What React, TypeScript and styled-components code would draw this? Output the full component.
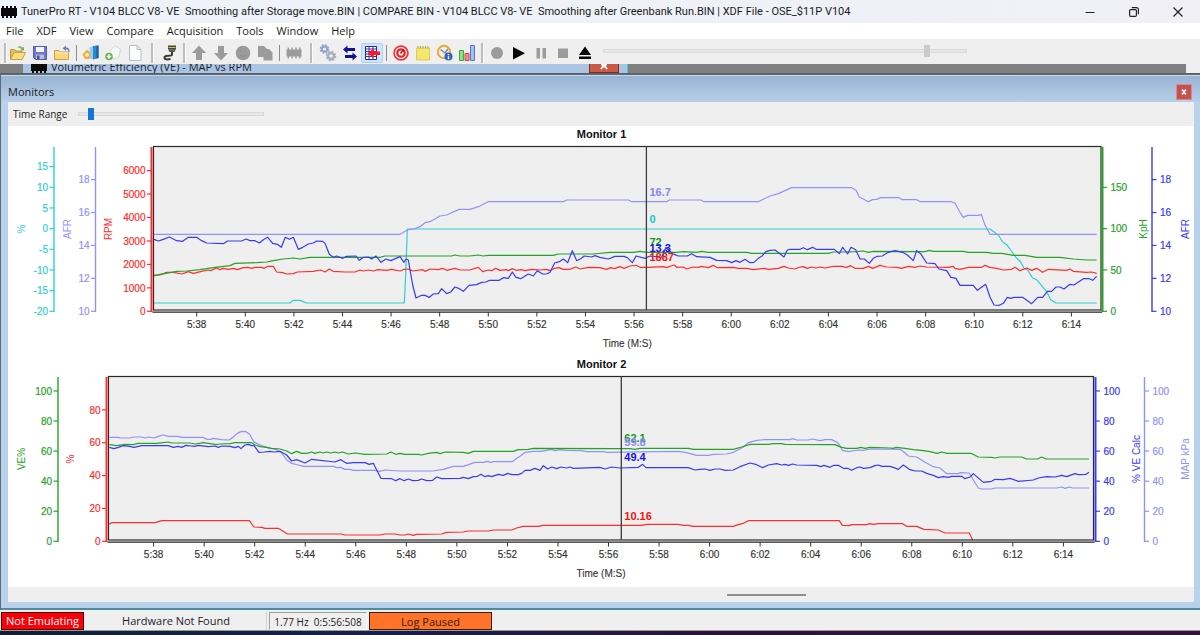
import React from 'react';
import styled, { createGlobalStyle, css } from 'styled-components';

const Global = createGlobalStyle`
  * { box-sizing: border-box; }
  html, body { margin: 0; padding: 0; }
  body {
    background: #efefef;
    color: #1c1c1c;
    font-family: "Open Sans", "Noto Sans", sans-serif;
    font-size: 11px;
    line-height: 16px;
  }
  button, input { font: inherit; color: inherit; margin: 0; padding: 0; }
`;

/* ---------- Frame ---------- */

const Frame = styled.div`
  display: flex;
  flex-direction: column;
  min-height: 100vh;
`;

const TitleBar = styled.header`
  display: flex;
  align-items: center;
  height: 23px;
  padding-left: 1px;
  gap: 4px;
  background: linear-gradient(90deg, #edf3fa, #f1f0f7);
`;

const TitleText = styled.h1`
  flex: 1;
  min-width: 0;
  margin: 0;
  overflow: hidden;
  white-space: pre;
  font-family: Roboto, "Open Sans", sans-serif;
  font-size: 11px;
  font-weight: 400;
`;

const Controls = styled.div`
  display: flex;
`;

const CaptionButton = styled.button`
  display: flex;
  align-items: center;
  justify-content: center;
  width: 44px;
  height: 22px;
  border: 0;
  background: none;
`;

const MenuBar = styled.nav`
  display: flex;
  gap: 13px;
  height: 16px;
  padding-left: 6px;
  background: #fff;
`;

const MenuItem = styled.button`
  border: 0;
  background: none;
  line-height: 16px;
`;

const ToolBar = styled.div`
  display: flex;
  align-items: center;
  height: 25px;
  padding: 2px 0 0 3px;
  background: #efefef;
`;

const Grip = styled.span<{ $width: number }>`
  width: ${p => p.$width}px;
  display: flex;
  justify-content: center;
  &::before {
    content: "";
    width: 2px;
    height: 20px;
    background: #bdbdbd;
    border-right: 1px solid #fafafa;
  }
`;

const Separator = styled.span`
  width: 7px;
  height: 16px;
  background: linear-gradient(#8c8c8c, #8c8c8c) center / 1px 16px no-repeat;
`;

const ToolButton = styled.button<{ $on?: boolean }>`
  display: flex;
  align-items: center;
  justify-content: center;
  width: 22px;
  height: 20px;
  border: 1px solid transparent;
  border-radius: 2px;
  background: none;
  ${p => p.$on && css`
    border-color: #a5d3f7;
    background: #cce6fb;
  `}
`;

const Range = styled.input<{ $thumb: string; $width: number }>`
  appearance: none;
  width: ${p => p.$width}px;
  height: 14px;
  background: none;
  &::-webkit-slider-runnable-track {
    height: 4px;
    border: 1px solid #d6dad9;
    background: #e5e8e7;
  }
  &::-webkit-slider-thumb {
    appearance: none;
    width: 6px;
    height: 12px;
    margin-top: -5px;
    background: ${p => p.$thumb};
  }
`;

const VolumeSlot = styled.div`
  display: flex;
  margin-left: 7px;
  padding-bottom: 4px;
`;

/* ---------- Document area ---------- */

const Strip = styled.div`
  display: flex;
  height: 10px;
  padding-right: 14px;
  overflow: hidden;
  border-bottom: 1px solid #5e5e5e;
`;

const Desk = styled.div<{ $width?: number }>`
  flex: ${p => (p.$width ? `0 0 ${p.$width}px` : '1')};
  background: #808080;
`;

const BackWindow = styled.div`
  display: flex;
  align-items: flex-end;
  flex: 0 1 605px;
  min-width: 0;
  padding: 0 8px;
  gap: 4px;
  background: #aac4e3;
  border-right: 1px solid #4fc3e0;
`;

const BackTitle = styled.span`
  flex: 1;
  white-space: nowrap;
`;

const BackClose = styled.button`
  display: flex;
  justify-content: center;
  width: 30px;
  height: 9px;
  border: 1px solid #7c2f2b;
  border-top: 0;
  background: linear-gradient(#c75945, #cf5a48);
`;

const Clip = styled.span`
  display: flex;
  align-items: center;
  height: 12px;
  flex: 1;
  min-width: 0;
  gap: 4px;
`;

const ToolWindow = styled.section`
  flex: 1;
  display: flex;
  flex-direction: column;
  padding: 0 6px 6px 7px;
  border: 1px solid #5c6c7c;
  border-width: 1px 0 2px 1px;
  border-bottom-color: #4e8c98;
  background: #b9d1ea;
`;

const WindowHeader = styled.div`
  display: flex;
  align-items: center;
  justify-content: space-between;
  height: 27px;
  margin: 0 -6px 0 -7px;
  padding: 5px 8px 0 7px;
  border-top: 1px solid #c4d8ec;
  background: linear-gradient(#98b4d2, #b7cfe8);
`;

const WindowTitle = styled.h2`
  margin: 0;
  font-size: 11px;
  font-weight: 400;
`;

const CloseButton = styled.button`
  display: flex;
  align-items: center;
  justify-content: center;
  width: 16px;
  height: 16px;
  border: 1px solid #d98a8a;
  background: #c75050;
`;

const RangeBar = styled.div`
  display: flex;
  align-items: center;
  height: 24px;
  padding: 0 5px;
  gap: 11px;
  background: #efefef;
`;

const RangeLabel = styled.label`
  width: 54px;
  font-size: 10px;
  white-space: nowrap;
`;

const Monitors = styled.div`
  flex: 1;
  background: #fff;
`;

const ScrollStrip = styled.div`
  display: grid;
  grid-template-columns: 719fr 79fr 388fr;
  align-items: center;
  height: 15px;
  background: #efefef;
`;

const ScrollThumb = styled.span`
  grid-column: 2;
  height: 2px;
  background: #8e8e8e;
`;

const StatusBar = styled.footer`
  display: flex;
  align-items: center;
  gap: 2px;
  height: 21px;
  padding: 1px 1px 0;
  border-bottom: 1px solid #9a9a9a;
  background: #efefef;
`;

type Tone = 'alert' | 'plain' | 'sunken' | 'paused';
const tones = {
  alert: css`border: 1px solid #4a0000; background: #fb0007; color: #fff; line-height: 15px;`,
  plain: css`border-right: 1px solid #d2d2d2;`,
  sunken: css`border: 1px solid #fafafa; border-top-color: #a0a0a0; border-left-color: #a0a0a0; font-size: 10px;`,
  paused: css`border: 1px solid #3d1c08; background: #ff7428; color: #3a1a08;`,
};

const StatusCell = styled.div<{ $tone: Tone; $width: number }>`
  width: ${p => p.$width}px;
  height: 18px;
  line-height: 18px;
  text-align: center;
  white-space: pre;
  ${p => tones[p.$tone]}
`;

const TaskEdge = styled.div`
  height: 4px;
  background: linear-gradient(90deg, #10202e, #16204a 30%, #2a1238 60%, #35123a);
`;

/* ---------- Chart ---------- */

const ChartSvg = styled.svg`
  display: block;
  width: 100%;
  height: auto;
  font-family: "Liberation Sans", Arial, sans-serif;
`;
const Tick = styled.text`font-size: 10px;`;
const Strong = styled.text`font-size: 11px; font-weight: 700;`;

const CYAN = '#2fcfcf';
const LILAC = '#9292fb';
const RED = '#ff2d2d';
const GREEN = '#24a324';
const BLUE = '#3a3af5';

type Axis = {
  x: number; side: 'left' | 'right'; color: string; name: string; nameX: number;
  labels: number[]; step: number; wide?: boolean;
};
type Trace = { color: string; points: string };
type Mark = { text: string; y: number; color: string };
type Monitor = {
  title: string; left: number; right: number; cursor: number;
  firstTick: number; lastTick: number; axes: Axis[]; traces: Trace[]; marks: Mark[];
};

const times = Array.from({ length: 19 }, (_, i) => {
  const s = 38 + i * 2;
  return `${s < 60 ? 5 : 6}:${String(s % 60).padStart(2, '0')}`;
});

const TOP = 22;
const BASE = 186;

function AxisView({ axis }: { axis: Axis }) {
  const dir = axis.side === 'left' ? -1 : 1;
  return (
    <g fill={axis.color} stroke="none">
      <path d={`M${axis.x} ${TOP}V${BASE + 1}`} stroke={axis.color} strokeWidth={axis.wide ? 2 : 1.4} />
      {axis.labels.map((v, i) => {
        const y = BASE + 0.3 - axis.step * i;
        return (
          <g key={v}>
            <path d={`M${axis.x} ${y}h${dir * 4.5}`} stroke={axis.color} strokeWidth="1.2" />
            <Tick x={axis.x + dir * (dir < 0 ? 6 : 8)} y={y + 3.7} textAnchor={dir < 0 ? 'end' : 'start'} stroke={axis.color} strokeWidth="0.2">{v}</Tick>
          </g>
        );
      })}
      <Tick transform={`translate(${axis.nameX} 104) rotate(-90)`} textAnchor="middle">{axis.name}</Tick>
    </g>
  );
}

function Chart({ m }: { m: Monitor }) {
  const mid = (m.left + m.right) / 2;
  return (
    <ChartSvg viewBox="8 1 1186 230" role="img" aria-label={m.title}>
      <Strong x="601.5" y="13" textAnchor="middle" fill="#111">{m.title}</Strong>
      <rect x={m.left} y="21.5" width={m.right - m.left} height="163.5" fill="#efefef" />
      {/* traces are sampled on a grid three times finer than the plot */}
      <g transform="scale(0.33333)" fill="none" strokeWidth="3.6" strokeLinejoin="round">
        {m.traces.map(t => <polyline key={t.color} points={t.points} stroke={t.color} />)}
      </g>
      <rect x={m.left} y="21.5" width={m.right - m.left} height="163.5" fill="none" stroke="#2a2a2a" strokeWidth="1.2" />
      <path d={`M${m.left - 1} 187.2H${m.right + 1}`} stroke="#222" strokeWidth="1.2" />
      <path d={`M${m.cursor} 21V185`} stroke="#3c3c3c" strokeWidth="1.3" />
      {m.marks.map(k => <Strong key={k.text} x={m.cursor + 3} y={k.y} fill={k.color}>{k.text}</Strong>)}
      {times.map((t, i) => {
        const x = m.firstTick + ((m.lastTick - m.firstTick) * i) / 18;
        return (
          <g key={t} fill="#333">
            <path d={`M${x} 187v4.5`} stroke="#333" />
            <Tick x={x} y="203" textAnchor="middle" stroke="#333" strokeWidth="0.15">{t}</Tick>
          </g>
        );
      })}
      <Tick x={mid} y="221.5" textAnchor="middle" fill="#333" stroke="#333" strokeWidth="0.1">Time (M:S)</Tick>
      {m.axes.map(a => <AxisView key={a.x} axis={a} />)}
    </ChartSvg>
  );
}

const steps = (from: number, by: number, n: number) => Array.from({ length: n }, (_, i) => from + by * i);

const monitor1: Monitor = {
  title: 'Monitor 1', left: 153.5, right: 1101, cursor: 646.4, firstTick: 196.7, lastTick: 1071.4,
  axes: [
    { x: 54, side: 'left', color: CYAN, name: '%', nameX: 25, labels: steps(-20, 5, 8), step: 20.67 },
    { x: 95.5, side: 'left', color: LILAC, name: 'AFR', nameX: 71, labels: steps(10, 2, 5), step: 32.92 },
    { x: 151.5, side: 'left', color: RED, name: 'RPM', nameX: 112, labels: steps(0, 1000, 7), step: 23.45, wide: true },
    { x: 1102.5, side: 'right', color: GREEN, name: 'KpH', nameX: 1147, labels: steps(0, 50, 4), step: 41.33, wide: true },
    { x: 1152, side: 'right', color: BLUE, name: 'AFR', nameX: 1189, labels: steps(10, 2, 5), step: 32.92 },
  ],
  traces: [
    { color: CYAN, points: '462,534 870,534 880,526 900,526 920,534 1213,534 1217,450 1222,312 2970,312 2995,330 3008,351 3020,359 3032,375 3048,397 3062,411 3072,430 3083,435 3097,458 3112,466 3125,482 3140,500 3152,524 3168,534 3290,534' },
    { color: RED, points: '462,450 480,450 500,442 520,442 545,447 565,440 580,445 605,439 625,435 632,437 650,429 660,434 670,430 685,433 700,430 712,434 730,428 745,427 755,430 765,427 785,427 793,430 803,424 820,424 830,441 848,443 860,447 880,446 892,441 940,439 962,435 975,441 988,432 1000,439 1035,441 1065,441 1080,435 1090,438 1105,435 1120,438 1133,434 1160,436 1175,433 1200,438 1215,432 1228,433 1238,438 1268,434 1275,439 1290,432 1315,434 1328,430 1340,436 1365,430 1380,435 1410,435 1435,427 1448,440 1465,435 1475,437 1487,430 1500,436 1520,434 1525,437 1538,431 1548,436 1565,434 1575,437 1595,433 1620,435 1640,433 1650,437 1663,430 1677,428 1690,433 1708,433 1728,426 1740,432 1765,427 1800,428 1820,433 1832,428 1843,431 1860,425 1872,430 1890,423 1908,421 1920,427 1945,427 1990,425 2000,428 2012,423 2023,420 2030,427 2050,426 2060,432 2080,426 2095,427 2105,424 2125,428 2140,421 2152,428 2200,427 2215,430 2240,430 2260,434 2295,430 2305,433 2335,430 2352,424 2365,429 2385,432 2400,426 2410,425 2422,430 2435,426 2448,429 2460,426 2475,429 2500,424 2525,424 2540,427 2552,422 2565,430 2590,430 2605,424 2618,430 2640,421 2660,426 2690,427 2705,430 2725,424 2745,427 2760,423 2780,426 2845,427 2860,424 2865,430 2880,433 2905,427 2945,427 2955,421 2970,427 2990,430 3010,435 3035,433 3045,427 3060,437 3080,429 3095,436 3110,430 3128,442 3145,433 3200,436 3210,432 3220,439 3260,442 3275,441 3290,445' },
    { color: GREEN, points: '462,453 480,448 510,443 530,439 560,438 600,434 640,428 690,422 705,415 770,413 800,411 820,407 850,402 880,399 900,402 930,397 1140,397 1155,393 1355,393 1365,390 1380,393 1410,393 1435,390 1450,393 1465,391 1660,391 1675,387 1780,387 1830,382 1900,382 1920,379 1940,382 2030,382 2050,380 2090,382 2105,379 2125,382 2240,382 2255,385 2485,385 2500,381 2530,381 2565,380 2590,378 2605,382 2620,379 2775,380 2788,376 2800,379 2890,379 2905,382 2960,382 2980,385 3005,385 3040,391 3075,391 3110,397 3180,397 3220,402 3260,405 3290,405' },
    { color: LILAC, points: '462,328 1200,328 1222,315 1245,311 1260,305 1275,293 1290,290 1320,273 1340,270 1377,253 1410,253 1435,245 1465,230 1690,230 1700,225 1885,225 1895,230 2000,230 2008,225 2103,225 2112,230 2275,230 2310,213 2335,206 2375,188 2555,188 2568,196 2578,216 2590,222 2605,230 2618,224 2630,223 2642,218 2698,218 2705,224 2750,224 2762,230 2855,230 2865,235 2880,262 2890,277 2903,271 2937,271 2944,268 2955,300 2970,328 3290,328' },
    { color: BLUE, points: '462,343 475,348 490,343 508,336 530,347 548,349 565,337 590,337 605,347 620,354 670,356 683,348 725,348 738,342 750,347 765,347 778,354 790,344 803,337 818,355 832,358 844,367 856,337 868,343 880,337 895,373 908,367 925,357 940,354 950,348 968,349 975,355 988,388 1000,397 1010,393 1028,400 1040,394 1068,393 1078,406 1090,397 1105,396 1115,402 1128,393 1143,412 1158,402 1172,407 1200,395 1212,412 1218,402 1225,405 1238,480 1248,519 1265,511 1275,511 1288,517 1300,507 1315,506 1325,491 1340,506 1352,501 1365,486 1378,491 1390,499 1407,481 1430,479 1445,472 1458,471 1468,466 1498,466 1510,458 1525,460 1537,441 1548,457 1562,461 1585,447 1600,453 1612,437 1628,447 1640,447 1650,442 1664,414 1678,410 1690,402 1703,413 1717,377 1730,407 1742,401 1753,393 1775,396 1785,392 1800,397 1825,402 1845,394 1872,394 1882,398 1897,413 1908,393 1935,400 1950,393 1985,397 1998,367 2012,381 2025,389 2035,393 2062,393 2075,386 2090,395 2130,397 2150,406 2180,407 2195,413 2208,407 2220,412 2235,403 2250,413 2262,412 2275,400 2285,394 2298,380 2310,376 2325,375 2338,385 2352,396 2362,375 2370,373 2400,373 2410,368 2422,374 2438,367 2448,373 2503,373 2518,386 2528,367 2543,387 2553,367 2567,374 2580,402 2593,402 2608,415 2620,400 2632,394 2647,393 2662,383 2685,377 2708,382 2722,390 2740,407 2750,377 2762,386 2780,414 2805,416 2817,432 2840,437 2853,457 2868,460 2880,481 2920,481 2932,496 2957,478 2970,516 2982,540 2998,541 3010,535 3022,517 3032,520 3042,517 3068,517 3095,536 3113,517 3128,517 3142,499 3155,499 3168,486 3180,486 3192,492 3210,478 3222,480 3250,461 3268,461 3278,466 3290,454' },
  ],
  marks: [
    { text: '16.7', y: 70.5, color: '#8484f8' },
    { text: '0', y: 97.8, color: '#12c6cc' },
    { text: '72', y: 120.7, color: '#139a13' },
    { text: '1887', y: 136.3, color: '#f51414' },
    { text: '13.3', y: 127, color: '#1414ee' },
  ],
};

const monitor2: Monitor = {
  title: 'Monitor 2', left: 108.5, right: 1093.5, cursor: 621.3, firstTick: 153.6, lastTick: 1063.4,
  axes: [
    { x: 58, side: 'left', color: GREEN, name: 'VE%', nameX: 25, labels: steps(0, 20, 6), step: 30.07 },
    { x: 106.5, side: 'left', color: RED, name: '%', nameX: 74, labels: steps(0, 20, 5), step: 32.85, wide: true },
    { x: 1095.5, side: 'right', color: BLUE, name: '% VE Calc', nameX: 1140, labels: steps(0, 20, 6), step: 30.07, wide: true },
    { x: 1144.5, side: 'right', color: LILAC, name: 'MAP kPa', nameX: 1189, labels: steps(0, 20, 6), step: 30.07 },
  ],
  traces: [
    { color: RED, points: '328,508 335,503 465,503 485,497 748,497 762,516 785,517 795,520 835,520 848,528 862,537 1025,537 1035,540 1140,540 1155,537 1185,537 1200,540 1215,540 1225,537 1240,541 1250,538 1325,537 1340,532 1390,531 1405,528 1465,528 1480,525 1535,525 1550,519 1570,514 1615,514 1628,511 1925,511 1940,508 2035,508 2050,511 2065,511 2080,514 2200,514 2215,509 2230,505 2245,497 2518,497 2527,511 2548,512 2555,509 2600,509 2610,506 2620,508 2635,506 2708,506 2720,514 2750,514 2772,523 2815,525 2835,534 2908,534 2918,555' },
    { color: LILAC, points: '328,247 355,247 363,249 390,249 400,246 425,246 437,249 445,246 462,249 475,244 490,240 505,244 535,244 545,247 608,247 622,253 632,253 640,250 665,254 688,255 700,246 712,235 725,229 738,230 748,237 763,262 785,272 810,280 828,283 845,294 860,315 875,325 895,330 910,334 1000,334 1010,338 1022,337 1035,343 1050,343 1060,346 1125,346 1140,349 1155,345 1200,348 1298,348 1330,343 1360,334 1390,334 1425,322 1450,322 1460,319 1472,322 1480,320 1537,320 1550,310 1562,302 1575,292 1600,289 1625,289 1640,286 1655,283 1665,287 1680,284 1695,286 1745,287 1760,290 1810,290 1820,292 2035,289 2060,293 2090,301 2125,301 2140,298 2180,297 2200,292 2215,284 2230,276 2245,263 2270,256 2295,254 2370,254 2380,251 2390,255 2425,255 2437,252 2460,257 2475,254 2495,254 2512,262 2520,272 2527,286 2545,290 2575,285 2590,286 2610,282 2700,283 2712,291 2725,303 2750,306 2775,322 2800,335 2820,339 2840,356 2875,356 2880,353 2908,354 2920,375 2935,399 2945,402 2975,402 2985,399 3170,399 3185,396 3195,400 3208,396 3218,399 3267,399' },
    { color: GREEN, points: '328,269 350,272 375,268 400,269 415,265 470,265 490,263 505,261 515,264 570,264 585,267 610,263 650,269 660,267 690,266 705,263 755,263 765,270 780,275 800,277 815,280 840,282 860,288 875,296 890,289 905,295 920,295 935,291 945,295 960,291 970,294 980,291 992,294 1005,291 1015,294 1027,291 1045,297 1065,294 1095,298 1160,297 1173,291 1187,298 1200,295 1215,298 1255,298 1265,300 1285,295 1310,292 1320,296 1335,291 1390,292 1405,295 1420,289 1540,289 1555,284 1585,283 1600,280 1845,281 1890,281 1905,283 1920,280 2065,280 2080,283 2200,283 2225,276 2250,268 2305,268 2320,266 2345,266 2355,268 2505,269 2525,277 2540,280 2570,280 2582,277 2595,280 2610,277 2670,279 2680,280 2688,277 2715,280 2740,284 2770,287 2790,290 2812,295 2825,291 2840,295 2913,295 2935,306 2975,307 2985,309 3000,306 3065,306 3080,312 3112,312 3125,306 3138,312 3267,312' },
    { color: BLUE, points: '328,277 342,281 355,277 370,272 388,274 402,277 425,272 505,272 520,277 535,274 545,277 558,271 575,273 583,274 595,271 625,275 645,273 655,277 665,273 690,274 705,278 715,274 723,281 735,270 745,268 755,272 762,272 777,292 793,291 810,289 820,291 840,289 860,300 875,318 890,314 915,324 935,313 1005,321 1022,314 1040,325 1060,323 1095,323 1107,328 1120,325 1130,345 1143,370 1175,371 1187,377 1200,371 1212,377 1225,372 1238,377 1255,376 1265,372 1280,377 1298,376 1310,366 1325,371 1380,370 1390,367 1405,371 1420,365 1432,364 1443,358 1455,365 1465,362 1475,365 1495,358 1510,361 1523,355 1535,359 1555,359 1565,355 1575,346 1590,346 1605,340 1620,346 1630,332 1643,342 1655,336 1670,341 1683,336 1700,339 1710,336 1720,340 1800,337 1815,342 1835,336 1860,339 1915,337 1928,328 1938,338 2065,338 2085,345 2100,343 2115,342 2130,346 2145,342 2160,342 2175,346 2200,345 2220,335 2250,324 2270,329 2288,338 2305,330 2330,326 2345,330 2355,328 2365,331 2378,327 2390,330 2450,331 2462,335 2472,331 2490,337 2502,331 2515,331 2530,340 2543,340 2555,346 2570,338 2580,336 2590,340 2610,338 2625,332 2635,330 2645,334 2670,334 2682,338 2695,343 2710,330 2730,344 2745,348 2765,348 2780,355 2800,361 2815,368 2830,365 2845,367 2855,364 2885,364 2895,371 2910,366 2920,356 2950,382 2975,379 2985,373 3010,374 3030,370 3055,379 3100,375 3115,369 3140,365 3165,366 3185,361 3200,365 3225,356 3235,359 3258,358 3267,352' },
  ],
  marks: [
    { text: '62.1', y: 87, color: '#139a13' },
    { text: '59.8', y: 91.3, color: '#8c8cfa' },
    { text: '49.4', y: 106.3, color: '#1414ee' },
    { text: '10.16', y: 164.7, color: '#f51414' },
  ],
};

/* ---------- Icons ---------- */

const Chip = () => (
  <svg width="16" height="14" viewBox="0 0 16 14" fill="#0a0a0a" aria-hidden="true">
    <path d="M0 3h16v8H0zM1 1h2v2H1zM5 1h2v2H5zM9 1h2v2H9zM13 1h2v2h-2zM1 11h2v2H1zM5 11h2v2H5zM9 11h2v2H9zM13 11h2v2h-2z" />
  </svg>
);

const GREY = '#9b9b9b';
const icons: Record<string, React.ReactNode> = {
  open: <>
    <path d="M1.5 15V5.5h4l1.500 1.500h6v8z" fill="#e9bd55" stroke="#c4963c" />
    <path d="M1.500 15.500l3.500-7h11.500l-3.500 7z" fill="#fbdc80" stroke="#cc9f43" />
    <path d="M8 3.500c2-2 4.500-1.500 5.500.2l1.300-1 .4 4-3.900-.7 1.300-.9c-.8-1.200-2.600-1.800-4.600-1.600z" fill="#6fb653" />
  </>,
  save: <>
    <path d="M2.500 2.500h13v13h-11l-2-2z" fill="#7177c9" stroke="#555bae" />
    <path d="M5 3h8v5H5z" fill="#f3f5fb" /><path d="M5 10.500h8V15H5z" fill="#b9bfd3" /><path d="M6 11.500h2.500V15H6z" fill="#4b5196" />
  </>,
  reopen: <>
    <path d="M1.500 15.500v-9h4.500l1.500 1.500h8v7.500z" fill="#f8d77c" stroke="#cba148" />
    <path d="M2 9h13.500" stroke="#fff0ba" />
    <path d="M16.500 8c.5-3-1-4.800-3.500-4.600V1.500L9.500 4.300 13 7V5.200c1.400-.1 2.300.8 2.300 2.800z" fill="#6e7fca" />
  </>,
  db: <>
    <path d="M7.500 3.500l3.500-1.500v13.500l-3.500-1.500z" fill="#8dcdf2" />
    <path d="M11 2l5.500-.5v12.500L11 15.500z" fill="#2f86c8" /><path d="M14.500 1.700l2-.2v12.500l-2 .5z" fill="#1c5f9e" />
    <path d="M5 5.500L8.500 9l-1 6H3l-2.500-4.500z" fill="#f2ab38" /><circle cx="5" cy="10.800" r="1.900" fill="#fff4d0" />
  </>,
  addtag: <>
    <path d="M6 6.500l5-4.500 5.500 3-1.500 8-5 2-4-3z" fill="#f7f7f7" stroke="#d6d6d6" />
    <circle cx="5" cy="12.500" r="3.800" fill="#69b255" /><path d="M5 10.300v4.400M2.800 12.500h4.400" stroke="#fff" strokeWidth="1.400" />
  </>,
  page: <path d="M3.500 1.500h7.500l4 4v11H3.500zM11 1.500v4h4" fill="#fcfcfc" stroke="#b9bcc6" />,
  plug: <>
    <path d="M8 1.500h8v3l-1.500 3.500h-5L8 4.500z" fill="#4a4a3e" /><path d="M8.500 3.500h7" stroke="#c9c25a" />
    <path d="M12 8v2.500c0 2.500-7.500 0-7.500 3 0 2.500 3 2 6 1.500" fill="none" stroke="#3a3a34" strokeWidth="2" />
    <path d="M9.500 6h5" stroke="#8a8a70" />
  </>,
  up: <path d="M9 1.500l7 7.500h-4v7H6V9H2z" fill={GREY} />,
  down: <path d="M9 16.500L2 9h4V2h6v7h4z" fill={GREY} />,
  ball: <><circle cx="9" cy="9" r="7.300" fill={GREY} /><path d="M6 7.500h1M11 7.500h1M6 11.500q3 1.800 6 0" stroke="#8c8c8c" fill="none" /></>,
  copy: <path d="M2 2h6l3 3h2l3.500 3.500V16.500H7.500V13H2z" fill={GREY} />,
  chip: <path d="M1.500 5.500h15v7h-15zM2.500 3.500H4v2H2.500zM6.300 3.500h1.500v2H6.300zM10.200 3.500h1.500v2h-1.500zM14 3.500h1.500v2H14zM2.500 12.500H4v2H2.500zM6.300 12.500h1.500v2H6.300zM10.200 12.500h1.500v2h-1.500zM14 12.500h1.500v2H14z" fill={GREY} />,
  gears: <>
    <circle cx="5.500" cy="5" r="2.700" fill="none" stroke="#93a5cc" strokeWidth="2.200" />
    <circle cx="5.500" cy="5" r="4.100" fill="none" stroke="#93a5cc" strokeWidth="1.400" strokeDasharray="1.800 1.420" />
    <circle cx="12" cy="12" r="3" fill="none" stroke="#a9aeb9" strokeWidth="2.400" />
    <circle cx="12" cy="12" r="4.500" fill="none" stroke="#a9aeb9" strokeWidth="1.500" strokeDasharray="2 1.534" />
  </>,
  swap: <>
    <path d="M2 5.500l4.500-4v2.500H14v3H6.500v2.500z" fill="#101098" /><path d="M16 12.500l-4.500-4v2.500H4v3h7.500v2.500z" fill="#101098" />
  </>,
  table: <>
    <path d="M2.500 2.500h11v13h-11z" fill="#fff" stroke="#25259a" />
    <path d="M2.500 5h11M2.500 7.500h11M2.500 10h11M2.500 12.500h11M6 2.500v13M10 2.500v13" stroke="#3a3aa6" />
    <path d="M5 9.300l5.500-5v3.200H17v3.600h-6.500v3.200z" fill="#ff1620" />
  </>,
  target: <>
    <circle cx="9" cy="9" r="6.900" fill="#fff" stroke="#f0383d" strokeWidth="1.800" />
    <circle cx="9" cy="9" r="3.700" fill="#fff" stroke="#ee2025" strokeWidth="2.300" />
    <path d="M8.500 9.500L11.500 5.500" stroke="#b61518" strokeWidth="1.500" />
  </>,
  note: <>
    <path d="M2.500 4h13v12h-13z" fill="#f5e66c" stroke="#dccb54" />
    <path d="M4 2v2.500M6.500 2v2.500M9 2v2.500M11.500 2v2.500M14 2v2.500" stroke="#a9a468" />
  </>,
  gauge: <>
    <circle cx="8" cy="8" r="6.200" fill="#f2f0e6" stroke="#eba63c" strokeWidth="2" />
    <path d="M4.500 5.500L9 9l3-4" stroke="#7c8aa0" strokeWidth="1.500" fill="none" />
    <circle cx="12.500" cy="12.500" r="4" fill="#2b62c4" /><path d="M12.500 10v1.200M12.500 12.200v3" stroke="#fff" strokeWidth="1.500" />
  </>,
  bars: <>
    <path d="M1.500 6.500h4v10h-4z" fill="#8be286" stroke="#46a548" /><path d="M7 9.500h4v7H7z" fill="#f08c82" stroke="#c4504c" />
    <path d="M12.500 1.500h4v15h-4z" fill="#a4c0f4" stroke="#5876c8" />
  </>,
  record: <circle cx="9" cy="9" r="6" fill={GREY} />,
  play: <path d="M3 3l12 6.200L3 15.500z" fill="#050505" />,
  pause: <path d="M4.500 4h3.500v10.500H4.500zM10.500 4H14v10.500h-3.500z" fill={GREY} />,
  stop: <path d="M4 4.500h10v9.500H4z" fill={GREY} />,
  eject: <path d="M9 2.500l6 8.500H3zM3 12.500h12v2.500H3z" fill="#050505" />,
};

const Tool = ({ id, label, on }: { id: string; label: string; on?: boolean }) => (
  <ToolButton $on={on} aria-label={label} aria-pressed={on}>
    <svg width="18" height="18" viewBox="0 0 18 18" aria-hidden="true">{icons[id]}</svg>
  </ToolButton>
);

function TitleControls() {
  return (
    <Controls>
      <CaptionButton aria-label="Minimize">
        <svg width="10" height="10" viewBox="0 0 10 10" aria-hidden="true"><path d="M0.500 5.500h9" stroke="#222" /></svg>
      </CaptionButton>
      <CaptionButton aria-label="Restore">
        <svg width="10" height="10" viewBox="0 0 10 10" fill="none" stroke="#222" strokeWidth="1.200" aria-hidden="true">
          <rect x="0.600" y="2.600" width="6.800" height="6.800" rx="1.200" /><path d="M2.800 0.600h4.600a2 2 0 0 1 2 2v4.600" />
        </svg>
      </CaptionButton>
      <CaptionButton aria-label="Close">
        <svg width="10" height="10" viewBox="0 0 10 10" aria-hidden="true"><path d="M0.500 0.500l9 9M9.500 0.500l-9 9" stroke="#222" strokeWidth="1.200" /></svg>
      </CaptionButton>
    </Controls>
  );
}

const menus = ['File', 'XDF', 'View', 'Compare', 'Acquisition', 'Tools', 'Window', 'Help'];

export default function App() {
  return (
    <Frame>
      <Global />
      <TitleBar>
        <Chip />
        <TitleText>{'TunerPro RT - V104 BLCC V8- VE  Smoothing after Storage move.BIN | COMPARE BIN - V104 BLCC V8- VE  Smoothing after Greenbank Run.BIN | XDF File - OSE_$11P V104'}</TitleText>
        <TitleControls />
      </TitleBar>
      <MenuBar>{menus.map(m => <MenuItem key={m}>{m}</MenuItem>)}</MenuBar>
      <ToolBar>
        <Grip $width={4} />
        <Tool id="open" label="Open" /><Tool id="save" label="Save" /><Tool id="reopen" label="Reopen" />
        <Separator />
        <Tool id="db" label="Load definition" /><Tool id="addtag" label="Add definition" /><Tool id="page" label="New" />
        <Grip $width={12} />
        <Tool id="plug" label="Connect" />
        <Grip $width={8} />
        <Tool id="up" label="Upload" /><Tool id="down" label="Download" /><Tool id="ball" label="Verify" /><Tool id="copy" label="Copy" />
        <Separator />
        <Tool id="chip" label="Chip" />
        <Grip $width={12} />
        <Tool id="gears" label="Settings" /><Tool id="swap" label="Swap" /><Tool id="table" label="Table tracing" on />
        <Separator />
        <Tool id="target" label="Acquire" /><Tool id="note" label="Notes" /><Tool id="gauge" label="Gauges" /><Tool id="bars" label="Monitors" />
        <Grip $width={8} />
        <Tool id="record" label="Record" /><Tool id="play" label="Play" /><Tool id="pause" label="Pause" /><Tool id="stop" label="Stop" /><Tool id="eject" label="Eject" />
        <VolumeSlot>
          <Range type="range" aria-label="Log position" min={0} max={100} defaultValue={90} $thumb="#cacaca" $width={364} />
        </VolumeSlot>
      </ToolBar>
      <Strip>
        <Desk $width={23} />
        <BackWindow>
          <Clip>
            <Chip />
            <BackTitle>Volumetric Efficiency (VE) - MAP vs RPM</BackTitle>
          </Clip>
          <BackClose aria-label="Close table">
            <svg width="10" height="6" viewBox="0 0 10 6" aria-hidden="true"><path d="M2 5l3-4 3 4M2.500 0L5 2.500 7.500 0" fill="none" stroke="#fff" strokeWidth="1.800" /></svg>
          </BackClose>
        </BackWindow>
        <Desk />
      </Strip>
      <ToolWindow>
        <WindowHeader>
          <WindowTitle>Monitors</WindowTitle>
          <CloseButton aria-label="Close monitors">
            <svg width="6" height="6" viewBox="0 0 6 6" aria-hidden="true"><path d="M1 0.500l4 5M5 0.500l-4 5" stroke="#fff" strokeWidth="1.600" /></svg>
          </CloseButton>
        </WindowHeader>
        <RangeBar>
          <RangeLabel htmlFor="time-range">Time Range</RangeLabel>
          <Range id="time-range" type="range" min={0} max={100} defaultValue={5} $thumb="#0f78d7" $width={186} />
        </RangeBar>
        <Monitors>
          <Chart m={monitor1} />
          <Chart m={monitor2} />
        </Monitors>
        <ScrollStrip><ScrollThumb /></ScrollStrip>
      </ToolWindow>
      <StatusBar>
        <StatusCell $tone="alert" $width={83}>Not Emulating</StatusCell>
        <StatusCell $tone="plain" $width={181}>Hardware Not Found</StatusCell>
        <StatusCell $tone="sunken" $width={98}>{'1.77 Hz  0:5:56:508'}</StatusCell>
        <StatusCell $tone="paused" $width={123}>Log Paused</StatusCell>
      </StatusBar>
      <TaskEdge />
    </Frame>
  );
}
